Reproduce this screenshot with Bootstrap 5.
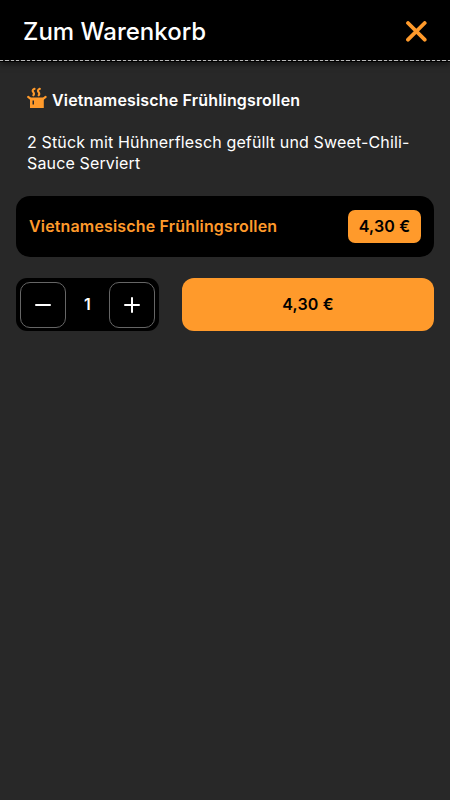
<!DOCTYPE html>
<html lang="de">
<head>
<meta charset="utf-8">
<meta name="viewport" content="width=device-width, initial-scale=1">
<title>Zum Warenkorb</title>
<link href="https://cdn.jsdelivr.net/npm/bootstrap@5.3.0/dist/css/bootstrap.min.css" rel="stylesheet">
<style>
:root { --accent: #ff9a2b; }
body { background: #282828; font-family: Inter, sans-serif; font-size: 16px; line-height: 21px; }
.cart-head { height: 62px; padding: 2px 23px 0 23px; background: #000; box-shadow: 0 2px 6px rgba(0,0,0,.55); }
.cart-head::after { content: ""; position: absolute; left: 0; right: 0; bottom: 1px; height: 1px; background: repeating-linear-gradient(90deg, #b8b8b8 0 3.300px, #222 3.300px 5.330px); }
.cart-title { font-size: 24px; line-height: 30px; font-weight: 500; }
.accent { color: var(--accent); }
.cart-body { padding: 24px 16px 0; }
.dish { padding: 0 11px; margin-bottom: 22px; }
.dish-text { letter-spacing: .145px; }
.dish-name { font-weight: 600; gap: 5px; height: 28px; margin-bottom: 18px; letter-spacing: .16px; }
.dish-name svg { margin-top: -5px; }
.dish-name span { padding-top: 1px; }
.variant { height: 61px; border-radius: 14px; padding: 0 13px; font-weight: 600; letter-spacing: .16px; }
.price { width: 73px; height: 33px; border-radius: 7px; background: var(--accent); }
.actions { gap: 23px; margin-top: 21px; height: 53px; }
.stepper { width: 143px; border-radius: 11px; padding: 0 3.500px; }
.step { width: 46px; height: 46px; border: 1px solid #666; border-radius: 10px; background: #000; }
.order { background: var(--accent); border-radius: 12px; font-weight: 600; letter-spacing: .16px; }
</style>
</head>
<body class="text-white">
<header class="cart-head position-relative d-flex align-items-center justify-content-between">
  <h1 class="cart-title m-0">Zum Warenkorb</h1>
  <button class="btn p-0 border-0 d-flex accent" aria-label="Schließen">
    <svg width="22" height="22" viewBox="0 0 22 22" fill="none" stroke="currentColor" stroke-width="3.800" stroke-linecap="round"><path d="M3 2 19.700 18.700M19.700 2 3 18.700"/></svg>
  </button>
</header>
<main class="cart-body">
  <section class="dish">
    <div class="dish-name d-flex align-items-center">
      <svg class="accent" width="20" height="22" viewBox="0 0 20 22" fill="currentColor">
        <path fill-rule="evenodd" d="M3 10.500H16.800V21H3ZM5.500 13.500V17.500H7V13.500Z"/>
        <path d="M4 12.300 1.200 9.900M15.800 12.300l2.800-2.400M7.500 1.800C2.700 4.300 9 5.400 6.400 8.300M12.800 1.800C8 4.300 14.300 5.400 11.700 8.300" fill="none" stroke="currentColor" stroke-width="2.100" stroke-linecap="round"/>
      </svg>
      <span>Vietnamesische Frühlingsrollen</span>
    </div>
    <p class="dish-text m-0">2 Stück mit Hühnerflesch gefüllt und Sweet-Chili-Sauce Serviert</p>
  </section>
  <div class="variant bg-black d-flex align-items-center justify-content-between">
    <span class="accent">Vietnamesische Frühlingsrollen</span>
    <span class="price text-black d-flex align-items-center justify-content-center">4,30 €</span>
  </div>
  <div class="actions d-flex">
    <div class="stepper bg-black d-flex align-items-center justify-content-between flex-shrink-0">
      <button class="step text-white p-0 d-flex align-items-center justify-content-center" aria-label="Weniger"><svg width="16" height="16" viewBox="0 0 16 16" stroke="currentColor" stroke-width="2" stroke-linecap="round"><path d="M1 8H15"/></svg></button>
      <span class="fw-semibold">1</span>
      <button class="step text-white p-0 d-flex align-items-center justify-content-center" aria-label="Mehr"><svg width="16" height="16" viewBox="0 0 16 16" stroke="currentColor" stroke-width="2" stroke-linecap="round"><path d="M1 8H15M8 1V15"/></svg></button>
    </div>
    <button class="order border-0 flex-grow-1 text-black">4,30 €</button>
  </div>
</main>
<script src="https://cdn.jsdelivr.net/npm/bootstrap@5.3.0/dist/js/bootstrap.bundle.min.js"></script>
</body>
</html>
